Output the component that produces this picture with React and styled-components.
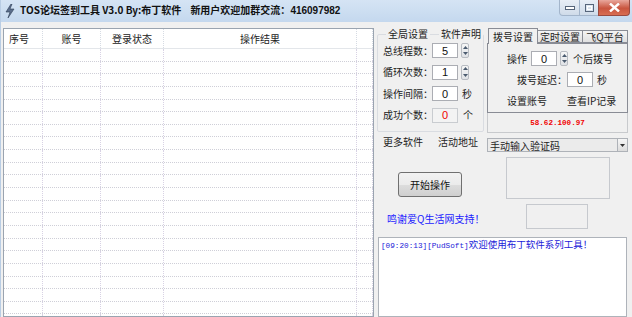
import React from "react";
import styled, { createGlobalStyle } from "styled-components";

const Global = createGlobalStyle`
  html, body { margin: 0; padding: 0; }
  body { font-family: "Noto Sans CJK SC", "Noto Sans", sans-serif; font-size: 10px; color: #1e1e1e; }
`;

const Win = styled.div`
  width: 632px;
  height: 317px;
  overflow: hidden;
  background: #f0f0f0;
  display: flex;
  flex-direction: column;
  box-sizing: border-box;
  border-left: 1px solid #b9cde4;
`;

const TitleBar = styled.div`
  height: 22px;
  flex: none;
  display: flex;
  align-items: center;
  background: linear-gradient(#d5e4f4, #c4d8ee);
  padding-left: 4px;
  gap: 5px;
`;

const TitleText = styled.div`
  font-weight: bold;
  font-size: 10px;
  line-height: 12px;
  color: #111;
  white-space: pre;
  margin-top: -1px;
`;

const Num = styled.span`
  font-family: "Liberation Sans", sans-serif;
  font-size: 10px;
`;

const Controls = styled.div`
  margin-left: auto;
  display: flex;
  align-self: flex-start;
  margin-right: 2px;
`;

const CtlBtn = styled.div`
  width: ${(p) => p.$w}px;
  height: 16px;
  border: 1px solid ${(p) => (p.$close ? "#9a4a40" : "#a3b5cb")};
  border-top: none;
  background: ${(p) =>
    p.$close ? "linear-gradient(#e9a79c, #c9553f 55%, #d86d52)" : "linear-gradient(#e8eef6, #cfdbe9)"};
  border-radius: ${(p) => p.$r};
  display: flex;
  align-items: center;
  justify-content: center;
  box-sizing: border-box;
  margin-left: -1px;
`;

const Main = styled.div`
  flex: 1;
  display: flex;
  padding: 6px 0 0 2px;
  gap: 3px;
  min-height: 0;
`;

const Table = styled.div`
  width: 371px;
  border: 1px solid #9aa4b0;
  background: #fff;
  box-sizing: border-box;
  flex: none;
  overflow: hidden;
`;

const cols = "39px 58px 63px 193px 16px";

const HeadRow = styled.div`
  display: grid;
  grid-template-columns: ${cols};
  height: 19px;
  border-bottom: 1px solid #e3e6ea;
`;

const HeadCell = styled.div`
  display: flex;
  align-items: center;
  justify-content: ${(p) => (p.$left ? "flex-start" : "center")};
  padding-left: ${(p) => (p.$left ? "5px" : "0")};
  border-right: 1px dotted #d6dbe3;
  font-size: 10px;
  color: #222;
`;

const Row = styled.div`
  display: grid;
  grid-template-columns: ${cols};
  height: 12.65px;
  box-sizing: border-box;
  border-bottom: 1px dotted #cfcfd8;
`;

const Cell = styled.div`
  border-right: 1px dotted #d8d2e4;
`;

const Side = styled.div`
  display: flex;
  flex-direction: column;
  width: 251px;
`;

const SideTop = styled.div`
  display: flex;
  gap: 6px;
`;

const LeftCol = styled.div`
  width: 104px;
  display: flex;
  flex-direction: column;
`;

const Group = styled.fieldset`
  margin: 0;
  padding: 3px 0 0 5px;
  border: 1px solid #d9dce1;
  border-radius: 2px;
  height: 104px;
  box-sizing: border-box;
  display: flex;
  flex-direction: column;
  gap: 6.5px;
`;

const Legend = styled.legend`
  padding: 0;
  margin-left: 3px;
  font-size: 10px;
  line-height: 12px;
  width: 97px;
  display: flex;
  align-items: center;
`;

const LegendPart = styled.span`
  padding: 0 2px;
`;

const LegendLine = styled.span`
  flex: 1;
  height: 0;
  border-top: 1px solid #d9dce1;
  margin-top: 1px;
`;

const FRow = styled.div`
  display: flex;
  align-items: center;
  height: 15px;
`;

const Label = styled.span`
  font-size: 10px;
  line-height: 12px;
  white-space: nowrap;
  width: ${(p) => (p.$w ? p.$w + "px" : "auto")};
  margin-left: ${(p) => p.$ml || 0}px;
  color: #222;
`;

const Input = styled.div`
  width: 26px;
  height: 15px;
  margin-left: ${(p) => p.$ml || 0}px;
  box-sizing: border-box;
  border: 1px solid ${(p) => (p.$disabled ? "#c9ccd0" : "#abadb3")};
  background: ${(p) => (p.$disabled ? "#f3f3f3" : "#fff")};
  display: flex;
  align-items: center;
  justify-content: center;
  font-family: "Liberation Sans", sans-serif;
  font-size: 11px;
  color: ${(p) => (p.$red ? "#f00000" : "#111")};
`;

const Spin = styled.div`
  width: 8px;
  height: 15px;
  margin-left: 3px;
  border: 1px solid #b8bcc2;
  box-sizing: border-box;
  background: linear-gradient(#f6f6f6, #dfe2e6);
  border-radius: 2px;
  display: flex;
  flex-direction: column;
  align-items: center;
  justify-content: space-around;
`;

const LinksRow = styled.div`
  display: flex;
  justify-content: space-between;
  padding: 0 3px 0 6px;
  margin-top: 4px;
  font-size: 10px;
  line-height: 12px;
`;

const Button = styled.div`
  margin: 24px 0 0 21px;
  width: 64px;
  height: 25px;
  box-sizing: border-box;
  border: 1px solid #707070;
  border-radius: 3px;
  background: linear-gradient(#f2f2f2 0%, #ebebeb 50%, #dddddd 51%, #cfcfcf 100%);
  display: flex;
  align-items: center;
  justify-content: center;
  font-size: 10px;
  color: #111;
`;

const Thanks = styled.div`
  margin: 16px 0 0 10px;
  color: #1a1aff;
  font-size: 10px;
  line-height: 12px;
  white-space: nowrap;
`;

const RightCol = styled.div`
  width: 141px;
  display: flex;
  flex-direction: column;
`;

const Tabs = styled.div`
  display: flex;
  align-items: flex-end;
  height: 15px;
  padding-left: 1px;
`;

const Tab = styled.div`
  height: ${(p) => (p.$active ? 16 : 13)}px;
  width: ${(p) => p.$w}px;
  box-sizing: border-box;
  border: 1px solid #898c95;
  border-bottom: ${(p) => (p.$active ? "none" : "1px solid #898c95")};
  background: ${(p) => (p.$active ? "#f0f0f0" : "linear-gradient(#f4f4f4, #e0e0e0)")};
  margin-left: ${(p) => (p.$first ? 0 : -1)}px;
  font-size: 10px;
  line-height: 11px;
  display: flex;
  align-items: center;
  justify-content: center;
  white-space: nowrap;
  position: relative;
  z-index: ${(p) => (p.$active ? 2 : 1)};
  margin-bottom: ${(p) => (p.$active ? -1 : 0)}px;
`;

const TabBody = styled.div`
  height: 70px;
  box-sizing: border-box;
  border: 1px solid #898c95;
  padding: 7px 0 0 0;
  display: flex;
  flex-direction: column;
  gap: 6px;
`;

const TRow = styled.div`
  display: flex;
  align-items: center;
  height: 15px;
  padding-left: ${(p) => p.$pl}px;
  gap: ${(p) => p.$gap || 0}px;
`;

const IpBox = styled.div`
  height: 20px;
  box-sizing: border-box;
  border: 1px solid #c8cacd;
  border-top: none;
  display: flex;
  align-items: center;
  justify-content: center;
  color: #f00000;
  font-family: "Liberation Mono", monospace;
  font-size: 7.6px;
  font-weight: bold;
`;

const Combo = styled.div`
  margin-top: 5px;
  height: 14px;
  box-sizing: border-box;
  border: 1px solid #aeb2b8;
  background: #ebebeb;
  display: flex;
  align-items: center;
  font-size: 10px;
  padding-left: 2px;
`;

const ComboBtn = styled.div`
  margin-left: auto;
  width: 9px;
  height: 12px;
  border-left: 1px solid #aeb2b8;
  background: linear-gradient(#f6f6f6, #dcdcdc);
  display: flex;
  align-items: center;
  justify-content: center;
`;

const PicBox = styled.div`
  margin: ${(p) => p.$m};
  width: ${(p) => p.$w}px;
  height: ${(p) => p.$h}px;
  border: 1px solid #c6c9ce;
  box-sizing: border-box;
`;

const Log = styled.div`
  margin-top: 8px;
  margin-left: 1px;
  width: 249px;
  height: 90px;
  box-sizing: border-box;
  border: 1px solid #aeb3ba;
  background: #fff;
  padding: 0 2px;
  color: #1a1ad8;
  font-size: 9.5px;
  line-height: 13px;
  white-space: nowrap;
`;

const Mono = styled.span`
  font-family: "Liberation Mono", monospace;
  font-size: 7.7px;
`;

function SpinArrows() {
  return (
    <Spin>
      <svg width="5" height="3" viewBox="0 0 5 3"><path d="M0 3 L2.5 0 L5 3Z" fill="#4a5a6e" /></svg>
      <svg width="5" height="3" viewBox="0 0 5 3"><path d="M0 0 L2.5 3 L5 0Z" fill="#4a5a6e" /></svg>
    </Spin>
  );
}

const headers = [
  { t: "序号", left: true },
  { t: "账号" },
  { t: "登录状态" },
  { t: "操作结果" },
  { t: "" },
];

export default function App() {
  const rows = Array.from({ length: 22 });
  return (
    <>
      <Global />
      <Win>
        <TitleBar>
          <svg width="10" height="14" viewBox="0 0 10 14">
            <path d="M6 0 L1 8 L5 8 L3 14 L9 5 L5 5 L7 0Z" fill="#5c6f8c" stroke="#2d3c55" strokeWidth="0.6" />
          </svg>
          <TitleText>
            TOS论坛签到工具 V3.0 By:布丁软件{"    "}新用户欢迎加群交流：<Num>416097982</Num>
          </TitleText>
          <Controls>
            <CtlBtn $w={21} $r="0 0 0 4px">
              <svg width="10" height="4"><rect x="0.5" y="0.5" width="9" height="3" fill="#fff" stroke="#56657a" /></svg>
            </CtlBtn>
            <CtlBtn $w={20} $r="0">
              <svg width="9" height="8"><rect x="0.5" y="0.5" width="8" height="7" fill="none" stroke="#56657a" /><rect x="2.5" y="2.5" width="4" height="3" fill="none" stroke="#fff" /></svg>
            </CtlBtn>
            <CtlBtn $w={32} $r="0 0 4px 0" $close>
              <svg width="11" height="9" viewBox="0 0 11 9">
                <path d="M1 0.5 L10 8.5 M10 0.5 L1 8.5" stroke="#fff" strokeWidth="2.4" />
              </svg>
            </CtlBtn>
          </Controls>
        </TitleBar>
        <Main>
          <Table>
            <HeadRow>
              {headers.map((h, i) => (
                <HeadCell key={i} $left={h.left}>{h.t}</HeadCell>
              ))}
            </HeadRow>
            {rows.map((_, r) => (
              <Row key={r}>
                {headers.map((_, c) => (
                  <Cell key={c} />
                ))}
              </Row>
            ))}
          </Table>
          <Side>
            <SideTop>
              <LeftCol>
                <Group>
                  <Legend>
                    <LegendPart>全局设置</LegendPart>
                    <LegendLine />
                    <LegendPart>软件声明</LegendPart>
                  </Legend>
                  <FRow>
                    <Label $w={49}>总线程数：</Label>
                    <Input>5</Input>
                    <SpinArrows />
                  </FRow>
                  <FRow>
                    <Label $w={49}>循环次数：</Label>
                    <Input>1</Input>
                    <SpinArrows />
                  </FRow>
                  <FRow>
                    <Label $w={49}>操作间隔：</Label>
                    <Input>0</Input>
                    <Label $ml={4}>秒</Label>
                  </FRow>
                  <FRow>
                    <Label $w={49}>成功个数：</Label>
                    <Input $disabled $red>0</Input>
                    <Label $ml={5}>个</Label>
                  </FRow>
                </Group>
                <LinksRow>
                  <span>更多软件</span>
                  <span>活动地址</span>
                </LinksRow>
                <Button>开始操作</Button>
                <Thanks>鸣谢爱Q生活网支持！</Thanks>
              </LeftCol>
              <RightCol>
                <Tabs>
                  <Tab $active $first $w={50}>拨号设置</Tab>
                  <Tab $w={46}>定时设置</Tab>
                  <Tab $w={46}>飞Q平台</Tab>
                </Tabs>
                <TabBody>
                  <TRow $pl={19}>
                    <Label>操作</Label>
                    <Input $ml={4}>0</Input>
                    <SpinArrows />
                    <Label $ml={5}>个后拨号</Label>
                  </TRow>
                  <TRow $pl={29}>
                    <Label>拨号延迟：</Label>
                    <Input>0</Input>
                    <Label $ml={4}>秒</Label>
                  </TRow>
                  <TRow $pl={19} $gap={20}>
                    <Label>设置账号</Label>
                    <Label>查看IP记录</Label>
                  </TRow>
                </TabBody>
                <IpBox>58.62.100.97</IpBox>
                <Combo>
                  手动输入验证码
                  <ComboBtn>
                    <svg width="5" height="3" viewBox="0 0 5 3"><path d="M0 0 L2.5 3 L5 0Z" fill="#333" /></svg>
                  </ComboBtn>
                </Combo>
                <PicBox $m="5px 0 0 19px" $w={104} $h={42} />
                <PicBox $m="5px 0 0 39px" $w={62} $h={25} />
              </RightCol>
            </SideTop>
            <Log>
              <Mono>[09:20:13][PudSoft]</Mono>欢迎使用布丁软件系列工具！
            </Log>
          </Side>
        </Main>
      </Win>
    </>
  );
}
